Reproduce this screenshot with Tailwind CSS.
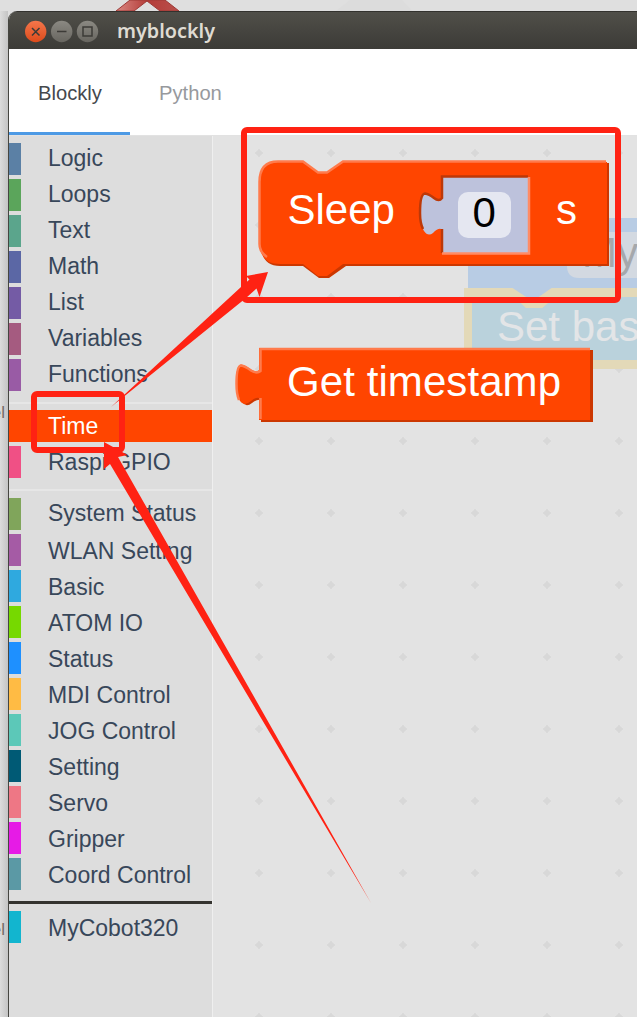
<!DOCTYPE html>
<html lang="en">
<head>
<meta charset="utf-8">
<title>myblockly</title>
<script src="https://cdn.jsdelivr.net/npm/@tailwindcss/browser@4"></script>
</head>
<body class="relative flex h-[1017px] w-[637px] overflow-hidden bg-[#dfdfdf] font-['Liberation_Sans',sans-serif]">
<!-- desktop behind the window -->
<svg class="absolute inset-0" width="637" height="1017">
  <defs>
    <linearGradient id="desk" x1="0" x2="1"><stop offset="0" stop-color="#dcdcdc"/><stop offset="1" stop-color="#c4c4c4"/></linearGradient>
    <linearGradient id="red" x1="0" x2="1"><stop offset="0" stop-color="#d98883"/><stop offset=".5" stop-color="#b43c38"/><stop offset="1" stop-color="#b9504c"/></linearGradient>
  </defs>
  <rect y="11" width="8" height="1006" fill="url(#desk)"/>
  <path d="M336 11 L350 0 H402 L412 11Z" fill="#dcdcdc"/>
  <path d="M116 11 L130 0 H165 L179 11 H160 L147 1 L134 11Z" fill="url(#red)" stroke="#9d3a37"/>
  <text x="5" y="418" text-anchor="end" font-size="17" fill="#756b66">el</text>
  <text x="5" y="935" text-anchor="end" font-size="17" fill="#756b66">el</text>
</svg>

<div class="relative mt-[11px] ml-2 flex w-[629px] flex-col overflow-hidden rounded-tl-[9px] border-l border-[#464641] bg-white">
  <header class="flex h-[38px] shrink-0 items-center border-t border-[#33322e] bg-linear-to-b from-[#504f49] to-[#3c3b37] pl-[16px]">
    <svg width="74" height="24" viewBox="0 0 74 24" class="mt-[3px] shrink-0">
      <defs>
        <linearGradient id="o" x2="0" y2="1"><stop stop-color="#f4764b"/><stop offset="1" stop-color="#dd4b1b"/></linearGradient>
        <linearGradient id="g" x2="0" y2="1"><stop stop-color="#8b8982"/><stop offset="1" stop-color="#686660"/></linearGradient>
      </defs>
      <circle cx="10.700" cy="11.500" r="10.700" fill="url(#o)"/>
      <circle cx="36.700" cy="11.500" r="10.700" fill="url(#g)"/>
      <circle cx="62.500" cy="11.500" r="10.700" fill="url(#g)"/>
      <g fill="none" stroke="#3c3b37" stroke-width="1.500">
        <path d="M7 8l7.500 7.500M14.500 8L7 15.500M32 11.500h9.500M58 7h9v9h-9z"/>
      </g>
    </svg>
    <h1 class="ml-[18px] font-['Noto_Sans',sans-serif] text-[19.800px] leading-none font-semibold text-[#dfdbd2]">myblockly</h1>
  </header>

  <nav class="flex h-[87px] shrink-0 border-b border-[#e2e2e2] bg-white text-[20.200px]">
    <a class="flex w-[121px] items-center border-b-3 border-[#4d9ae5] pt-[5px] pl-[29px] text-[#45484d]">Blockly</a>
    <a class="flex items-center pt-[2px] pl-[29px] text-[#97999d]">Python</a>
  </nav>

  <main class="flex grow">
    <ul id="toolbox" class="flex w-[204px] shrink-0 flex-col border-r border-[#efefef] bg-[#dddddd] pt-[7px] text-[23px] text-[#38475a]"></ul>

    <section class="relative grow bg-[#e3e3e3]">
      <svg class="absolute inset-0" width="424" height="881" viewBox="213 136 424 881">
        <defs>
          <pattern id="grid" x="223" y="117" width="72" height="72" patternUnits="userSpaceOnUse">
            <path d="M36 31.500L38 34L40.500 36L38 38L36 40.500L34 38L31.500 36L34 34Z" fill="#d8d8d8"/>
          </pattern>
        </defs>
        <rect x="213" y="136" width="424" height="881" fill="url(#grid)"/>

        <!-- workspace blocks dimmed by the flyout -->
        <path d="M468 218H637V290H468Z" fill="#b8cce4"/>
        <path d="M637 232H579Q567 232 567 244V266Q567 278 579 278H637Z" fill="#d3d9e1"/>
        <text x="582" y="267" font-size="42" fill="#a5a8ac">My</text>
        <path d="M464 288H637V369H464Z" fill="#e3d9b8"/>
        <path d="M472 297H517L526 308H542L555 297H637V360H472Z" fill="#bad2dc"/>
        <path d="M514 297L526 308H542L555 297Z" fill="#e3d9b8"/>
        <path d="M511 287L527 297.500H538L553 287Z" fill="#b8cce4"/>
        <text x="497" y="341" font-size="42" fill="#e3e5e7">Set base</text>

        <!-- Sleep block -->
        <g>
          <path d="M279 163H303L318 174H327L343 163H609V266H346L329 278H319L303 266H280Q261 266 261 244V184Q261 163 279 163Z" fill="#cc3700"/>
          <path d="M278 162H303L318 173H327L343 162H607V264H343L327 276H318L303 264H280Q260 264 260 244V182Q260 162 278 162Z" fill="#ff4500"/>
          <path d="M267 257Q259.500 252 259.500 244V182Q259.500 161.500 278 161.500H303L318 172.500H327L343 161.500H606" fill="none" stroke="#ff7b4c" stroke-width="2.500"/>
          <path d="M441 176H528V253H441V229Q438 228 433 233Q428 237 424 231Q420 225 420 213Q420 194 425 193.500Q429 194 434 198Q439 201 441 198Z" fill="#bdc2dc"/>
          <path d="M528 176.500H442V198Q439 202 434 198Q429 194 425 193.500Q420 194 420 213Q420 223 423 229M442 229V253" fill="none" stroke="#bd3807" stroke-width="2.500"/>
          <path d="M529 177V253.500H442" fill="none" stroke="#ff8b65" stroke-width="2.500"/>
          <rect x="458" y="192" width="53" height="46" rx="10" fill="#e5e7f1"/>
          <text x="287.500" y="224" font-size="42" fill="#fff">Sleep</text>
          <text x="472.500" y="227" font-size="42" fill="#000">0</text>
          <text x="556" y="224" font-size="42" fill="#fff">s</text>
        </g>

        <!-- Get timestamp block -->
        <g>
          <path d="M261 350H593V422H261V400Q257 399 252 403Q246 408 242 402Q238 396 238 384L261 376Z" fill="#cc3700"/>
          <path d="M259 348H590V420H259V398Q256 397 251 401Q244 407 240 401Q236 395 236 384Q236 365 241 364.500Q245 365 251 369.500Q257 373 259 370Z" fill="#ff4500"/>
          <path d="M260.500 419V398M239 400Q236.500 394 236.500 384Q236.500 366 241 365.500Q245 366 251 370.500Q257 374 260.500 371V349H590" fill="none" stroke="#ff7b4c" stroke-width="2.500"/>
          <text x="287" y="396" font-size="42" textLength="274" fill="#fff">Get timestamp</text>
        </g>
      </svg>
    </section>
  </main>
</div>

<!-- annotations -->
<svg class="absolute inset-0" width="637" height="1017" fill="none">
  <rect x="244" y="130" width="374" height="170" rx="3" stroke="#ff2213" stroke-width="6"/>
  <rect x="34" y="394" width="88" height="56" rx="3" stroke="#ff2213" stroke-width="6"/>
  <path d="M111 407L241 287L249.500 279.500L246 276L268 272L259.500 297L256.500 288.500L246 298Z" fill="#ff2213"/>
  <path d="M104 442L127.500 455L118 457L371 903L110 464L104 469Z" fill="#ff2213"/>
</svg>

<script>
// [label, colour, lowered baseline]
const groups = [
  [['Logic','#5b80a5'],['Loops','#5ba55b'],['Text','#5ba58c'],['Math','#5b67a5'],['List','#745ba5'],['Variables','#a55b80'],['Functions','#995ba5']],
  [['Time','#ff4500'],['Raspi GPIO','#f05085']],
  [['System Status','#80a55b'],['WLAN Setting','#a55ba5',1],['Basic','#2fa9df',1],['ATOM IO','#76d900',1],['Status','#1e90ff',1],['MDI Control','#ffbb44',1],['JOG Control','#5cc8b8',1],['Setting','#005a75',1],['Servo','#ee7785',1],['Gripper','#e61be6',1],['Coord Control','#5b99a5',1]],
  [['MyCobot320','#12b5cf',1]]
];
const seps = [
  '<li class="mt-[7px] mb-[6px] h-0.5 shrink-0 bg-[#e6e6e6]"></li>',
  '<li class="mt-[7px] mb-[7px] h-0.5 shrink-0 bg-[#e6e6e6]"></li>',
  '<li class="mt-[7px] mb-[7px] h-[3px] shrink-0 bg-[#34332f]"></li>'
];
document.getElementById('toolbox').innerHTML = groups.map((g, i) =>
  g.map(([n, c, low]) => `<li class="mb-1 flex h-8 shrink-0 items-center whitespace-nowrap ${n === 'Time' ? 'text-white' : ''}" ${n === 'Time' ? 'style="background:' + c + '"' : ''}><span class="mr-[27px] h-[31.500px] w-3 shrink-0" style="background:${c}"></span><span class="leading-[30px] ${low ? 'pt-0.5' : n === 'Time' || n === 'Raspi GPIO' ? '' : 'pb-0.5'}">${n}</span></li>`).join('') + (seps[i] || '')
).join('');
</script>
</body>
</html>
